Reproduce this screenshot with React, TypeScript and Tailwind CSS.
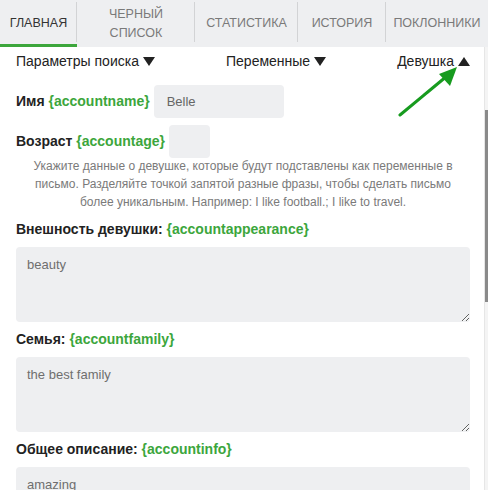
import React from "react";

const tabs = [
  { id: "main", label: "ГЛАВНАЯ", width: "w-[77px]" },
  { id: "black", label: "ЧЕРНЫЙ СПИСОК", width: "w-[118px]" },
  { id: "stats", label: "СТАТИСТИКА", width: "w-[103px]" },
  { id: "history", label: "ИСТОРИЯ", width: "w-[88px]" },
  { id: "fans", label: "ПОКЛОННИКИ", width: "flex-1" },
];

function Tri({ up }: { up?: boolean }) {
  return (
    <svg width="12" height="9" viewBox="0 0 12 9" className="ml-[4px] inline-block">
      {up ? <path d="M0 9 L6 0 L12 9 Z" fill="#222" /> : <path d="M0 0 L12 0 L6 9 Z" fill="#222" />}
    </svg>
  );
}

function Label({ title, tag }: { title: string; tag: string }) {
  return (
    <p className="text-[14px] font-bold text-[#222]">
      {title} <span className="text-[#3ca63c]">{tag}</span>
    </p>
  );
}

function Area({ value }: { value: string }) {
  return (
    <textarea
      defaultValue={value}
      className="mt-[7px] block h-[75px] w-full resize-y rounded-[4px] bg-[#eeeff1] px-[11px] py-[8px] text-[13px] text-[#6e6e6e] outline-none"
    />
  );
}

export default function App() {
  return (
    <div className="relative h-[490px] w-[488px] overflow-hidden bg-white font-['Liberation_Sans',Arial,sans-serif]">
      {/* tabs */}
      <div className="flex h-[47px] bg-[#eeeff1]">
        {tabs.map((t, i) => (
          <div key={t.id} className={`${t.width} relative flex items-center`}>
            <div
              className={`flex h-full w-full items-center justify-center text-center text-[12.5px] leading-[19px] ${
                i === 0 ? "text-[#333]" : "text-[#7a7a7a]"
              }`}
            >
              {t.id === "black" ? (
                <span>
                  ЧЕРНЫЙ
                  <br />
                  СПИСОК
                </span>
              ) : (
                t.label
              )}
            </div>
            {i < tabs.length - 1 && <div className="absolute right-0 top-[2px] h-[40px] w-px bg-[#d2d3d5]" />}
            {i === 0 && <div className="absolute bottom-0 left-0 h-[3px] w-full bg-[#3ca63c]" />}
          </div>
        ))}
      </div>

      <div className="flex">
        <div className="w-[484px] pl-4 pr-[14px]">
          {/* filters */}
          <div className="flex h-[28px] items-center text-[14px] text-[#222]">
            <span className="flex w-[210px] items-center">
              Параметры поиска <Tri />
            </span>
            <span className="flex flex-1 items-center">
              Переменные <Tri />
            </span>
            <span className="flex items-center">
              Девушка <Tri up />
            </span>
          </div>

          <div className="mt-[10px] flex items-center">
            <Label title="Имя" tag="{accountname}" />
            <input
              defaultValue="Belle"
              className="ml-[4px] h-[33px] w-[130px] rounded-[4px] bg-[#eeeff1] px-[13px] text-[13px] text-[#666] outline-none"
            />
          </div>

          <div className="mt-[7px] flex items-center">
            <Label title="Возраст" tag="{accountage}" />
            <input className="ml-[4px] h-[33px] w-[41px] rounded-[4px] bg-[#eeeff1] outline-none" />
          </div>

          <p className="mx-[10px] -mt-[1px] text-center text-[12px] leading-[18px] text-[#7a7a7a]">
            Укажите данные о девушке, которые будут подставлены как переменные в письмо. Разделяйте точкой запятой
            разные фразы, чтобы сделать письмо более уникальным. Например: I like football.; I like to travel.
          </p>

          <div className="mt-[8px]">
            <Label title="Внешность девушки:" tag="{accountappearance}" />
            <Area value="beauty" />
          </div>

          <div className="mt-[7px]">
            <Label title="Семья:" tag="{accountfamily}" />
            <Area value="the best family" />
          </div>

          <div className="mt-[7px]">
            <Label title="Общее описание:" tag="{accountinfo}" />
            <Area value="amazing" />
          </div>
        </div>

        {/* scrollbar */}
        <div className="h-[443px] w-[4px] border-l border-[#e6e6e6] bg-[#f4f4f4]">
          <div className="mt-[63px] h-[192px] w-full bg-[#8a8a8a]" />
        </div>
      </div>

      {/* pointer arrow */}
      <svg className="absolute left-[395px] top-[60px]" width="70" height="60" viewBox="0 0 70 60">
        <line x1="5" y1="55" x2="52" y2="16" stroke="#179b1f" strokeWidth="3" strokeLinecap="round" />
        <path d="M62 7 L44 14 L55 26 Z" fill="#179b1f" />
      </svg>
    </div>
  );
}
